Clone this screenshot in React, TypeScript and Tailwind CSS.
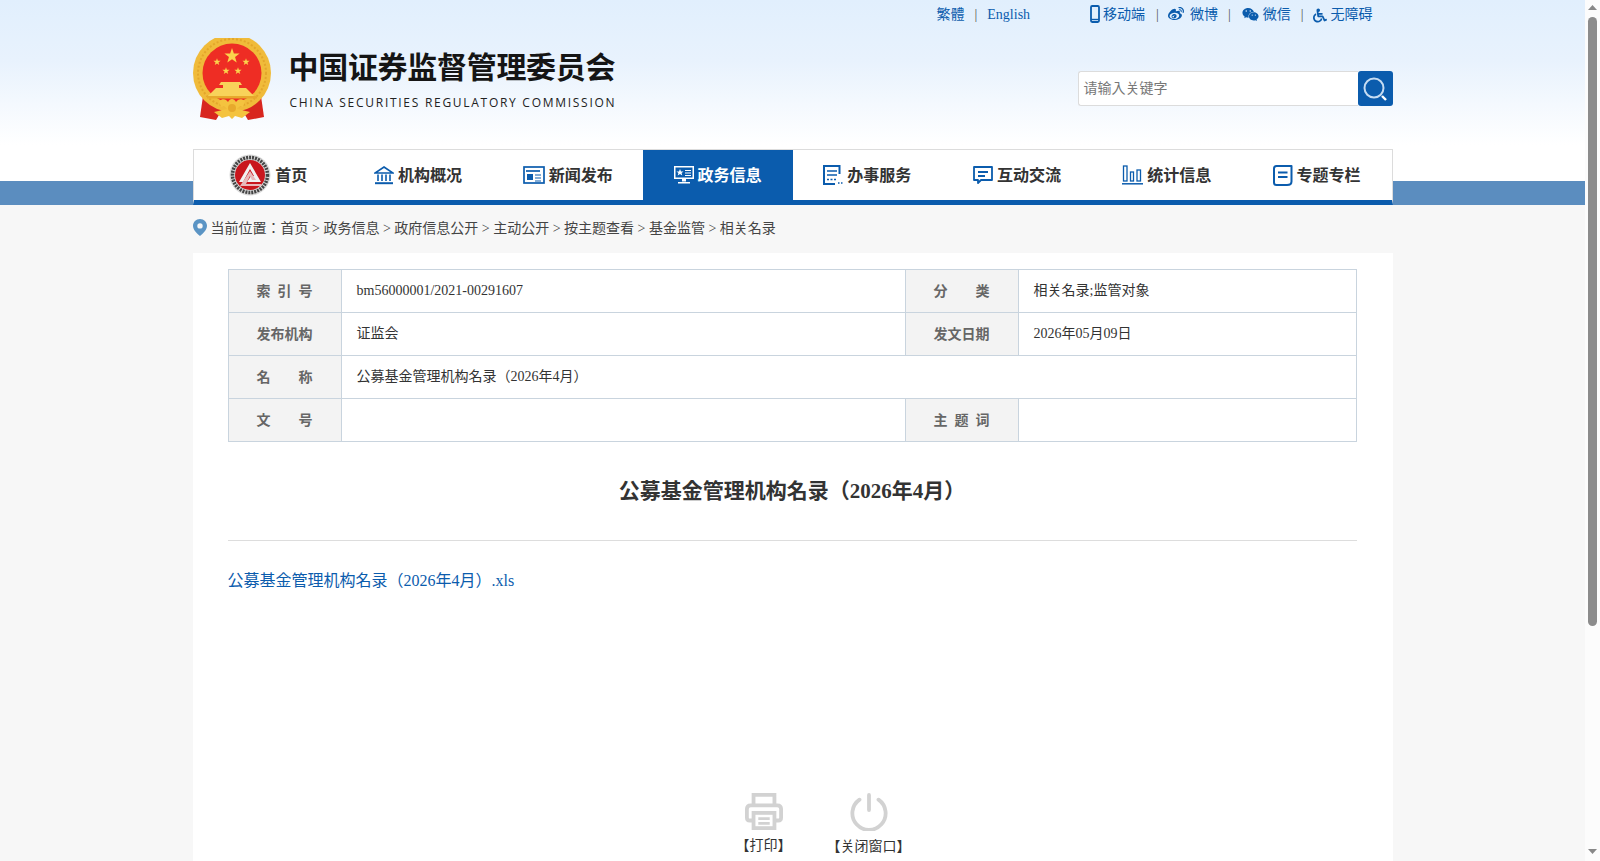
import { FaWeibo, FaWeixin, FaWheelchair } from "react-icons/fa";

const serif = "font-['Liberation_Serif','Noto_Sans_CJK_JP',serif]";

function Star({ x, y, r }: { x: number; y: number; r: number }) {
  const pts = [];
  for (let i = 0; i < 10; i++) {
    const a = -Math.PI / 2 + (i * Math.PI) / 5;
    const rr = i % 2 === 0 ? r : r * 0.4;
    pts.push(`${x + rr * Math.cos(a)},${y + rr * Math.sin(a)}`);
  }
  return <polygon points={pts.join(" ")} fill="#fbd34c" />;
}

// national emblem, simplified
function Emblem() {
  return (
    <svg className="ml-[-1px]" width="80" height="84" viewBox="0 0 80 84">
      <path d="M11 58 L8 79 L24 82 L30 72 L24 60Z" fill="#d8261f" />
      <path d="M69 58 L72 79 L56 82 L50 72 L56 60Z" fill="#d8261f" />
      <circle cx="40" cy="35" r="39" fill="#f0bb3a" />
      <circle cx="40" cy="35" r="34" fill="none" stroke="#e3a62b" strokeWidth="2" strokeDasharray="2 2" />
      <circle cx="40" cy="35" r="29.5" fill="#ee2d24" />
      <Star x={40} y={18} r={8} />
      <Star x={25} y={24} r={3.8} />
      <Star x={54} y={24} r={3.8} />
      <Star x={34} y={33} r={3.8} />
      <Star x={46} y={33} r={3.8} />
      <path d="M29 44 H48 L50 47 H47 V50 H54 L62 58 H16 L24 50 H31 V47 H27Z" fill="#f8d25a" />
      <rect x="15" y="58" width="50" height="2.5" fill="#e7a92c" />
      <path d="M27 63 C31 60 34 61 36 64 C38 60 42 60 44 64 C46 61 49 60 53 63 L51 69 C48 68 46 69 45 71 L58 74 L50 80 L43 78 L40 81 L37 78 L30 80 L22 74 L35 71 C34 69 32 68 29 69Z" fill="#f4c33f" />
      <circle cx="40" cy="70" r="4" fill="#e7a92c" />
    </svg>
  );
}

function HomeLogo() {
  return (
    <svg width="42" height="42" viewBox="0 0 42 42">
      <circle cx="21" cy="21" r="20.5" fill="#d9d9d9" />
      <circle cx="21" cy="21" r="17.5" fill="none" stroke="#444" strokeWidth="3.5" strokeDasharray="2 1" />
      <circle cx="21" cy="21" r="15" fill="#c9161d" />
      <path d="M21 9 L32 28 H18 L22 22 H25 L21 15 L14 28 H10Z" fill="#f1f1f1" />
      <path d="M21 17 L27 26 H23 L21 22 L17 30 H32 L33 32 H11Z" fill="#e8b9bb" />
    </svg>
  );
}

const blue = "#0b5cad";

function NavIcon({ name, active }: { name: string; active?: boolean }) {
  const c = active ? "#fff" : blue;
  if (name === "bank")
    return (
      <svg width="20" height="20" viewBox="0 0 20 20" fill="none" stroke={c} strokeWidth="1.6">
        <path d="M10 2 L19 8 H1Z" />
        <path d="M4 9.5V16M8 9.5V16M12 9.5V16M16 9.5V16" />
        <path d="M1 18.2H19" strokeWidth="2" />
      </svg>
    );
  if (name === "news")
    return (
      <svg width="22" height="18" viewBox="0 0 22 18" fill="none" stroke={c} strokeWidth="1.7">
        <rect x="1" y="1" width="20" height="16" />
        <path d="M3 5H17" />
        <rect x="4" y="8" width="6" height="6" fill={c} stroke="none" />
        <path d="M12 9H18M12 12H18M12 15H18" strokeWidth="1" />
      </svg>
    );
  if (name === "gov")
    return (
      <svg width="20" height="18" viewBox="0 0 20 18" fill={c}>
        <path fillRule="evenodd" d="M0 0H20V13H0ZM1.5 1.5V11.5H18.5V1.5Z" />
        <path d="M6 3 L7 5.5 H9.5 L7.6 7 L8.3 9.5 L6 8 L3.7 9.5 L4.4 7 L2.5 5.5 H5Z" />
        <path d="M11 4H17V5H11ZM11 6.5H17V7.5H11ZM11 9H17V10H11Z" />
        <path d="M8 13H12V15.5H8ZM4 16H16V17.5H4Z" />
      </svg>
    );
  if (name === "service")
    return (
      <svg width="20" height="20" viewBox="0 0 20 20" fill="none" stroke={c}>
        <path d="M16.5 9V1H1V19H12" strokeWidth="2" />
        <path d="M4 6H14M4 10H14" strokeWidth="1.5" />
        <path d="M4 14.5H13" strokeWidth="1.5" strokeDasharray="2 1.5" />
        <path d="M15 18H20" strokeWidth="1.6" strokeDasharray="1.5 1.5" />
      </svg>
    );
  if (name === "chat")
    return (
      <svg width="20" height="19" viewBox="0 0 20 19" fill="none" stroke={c} strokeWidth="1.8">
        <path d="M1 1H19V14H8L5 17V14H1Z" strokeLinejoin="round" />
        <path d="M5 6H15M5 10H12" />
      </svg>
    );
  if (name === "stats")
    return (
      <svg width="21" height="20" viewBox="0 0 21 20" fill="none" stroke={c} strokeWidth="1.3">
        <rect x="1.5" y="1" width="3.5" height="15" />
        <rect x="8.5" y="7" width="3" height="9" />
        <rect x="15" y="5" width="3.5" height="11" />
        <path d="M0 18.8H21" strokeWidth="1.5" />
      </svg>
    );
  return (
    <svg width="20" height="21" viewBox="0 0 20 21" fill="none" stroke={c} strokeWidth="2">
      <path d="M18.5 1H3.5Q1 1 1 3.5V17.5Q1 20 3.5 20H14Q18.5 20 18.5 16.5Z" strokeLinejoin="round" />
      <path d="M5 7.5H14.5M5 12H14.5" strokeWidth="2" />
    </svg>
  );
}

const navItems = [
  { label: "首页", icon: "home" },
  { label: "机构概况", icon: "bank" },
  { label: "新闻发布", icon: "news" },
  { label: "政务信息", icon: "gov", active: true },
  { label: "办事服务", icon: "service" },
  { label: "互动交流", icon: "chat" },
  { label: "统计信息", icon: "stats" },
  { label: "专题专栏", icon: "topic" },
];

const crumbs = ["首页", "政务信息", "政府信息公开", "主动公开", "按主题查看", "基金监管", "相关名录"];

function TopBar() {
  return (
    <div className={`h-[28px] flex items-center text-[14px] text-[#0b5cad] ${serif}`}>
      <span className="ml-[744px]">繁體</span>
      <span className="text-[#555] ml-[10px] mr-[10px]">|</span>
      <span>English</span>
      <span className="ml-[60px] flex items-center gap-[3px]">
        <svg width="10" height="18" viewBox="0 0 10 18" fill="none" stroke={blue} strokeWidth="1.8">
          <rect x="1" y="1" width="8" height="16" rx="1.2" />
          <path d="M1 14.5H9" strokeWidth="1.4" />
        </svg>
        移动端
      </span>
      <span className="text-[#555] ml-[11px] mr-[8px]">|</span>
      <span className="flex items-center gap-[5px]">
        <FaWeibo className="w-[18px] h-[16px]" />
        微博
      </span>
      <span className="text-[#555] ml-[10px] mr-[11px]">|</span>
      <span className="flex items-center gap-[4px]">
        <FaWeixin className="w-[17px] h-[15px]" />
        微信
      </span>
      <span className="text-[#555] ml-[10px] mr-[9px]">|</span>
      <span className="flex items-center gap-[4px]">
        <FaWheelchair className="w-[14px] h-[17px] mt-[3px]" />
        无障碍
      </span>
    </div>
  );
}

function Header() {
  return (
    <div className="bg-[linear-gradient(to_bottom,#e1effd_0,#e8f2fd_60px,#ffffff_145px,#ffffff_181px,#5b8dbf_181px,#5b8dbf_205px)] h-[205px]">
      <div className="w-[1200px] mx-auto">
        <TopBar />
        <div className="flex items-start h-[121px]">
          <div className="mt-[10px] flex items-start">
            <Emblem />
            <div className="ml-[17px] mt-[7px]">
              <div className="font-['Noto_Sans_CJK_SC',sans-serif] font-bold text-[30px] leading-[40px] text-[#151515] tracking-[-0.3px] whitespace-nowrap">
                中国证券监督管理委员会
              </div>
              <div className="font-['Open_Sans',sans-serif] text-[12px] leading-[16px] mt-[10px] ml-[1px] text-[#222] tracking-[1.72px] whitespace-nowrap">
                CHINA SECURITIES REGULATORY COMMISSION
              </div>
            </div>
          </div>
          <div className="ml-auto mt-[43px] flex w-[315px] h-[35px]">
            <div className={`flex-1 bg-white border border-[#dcdcdc] border-r-0 rounded-l-[3px] text-[14px] text-[#777] pl-[5px] leading-[33px] ${serif}`}>
              请输入关键字
            </div>
            <div className="w-[35px] bg-[#0b5cad] rounded-[3px] flex items-center justify-center">
              <svg width="26" height="26" viewBox="0 0 26 26" fill="none" stroke="#c6dcf2" strokeWidth="2">
                <circle cx="12" cy="12" r="9.5" />
                <path d="M20 20L24 24" stroke="#fff" strokeWidth="2.4" />
              </svg>
            </div>
          </div>
        </div>
        <div className="h-[56px] bg-white border-t border-x border-[#dcdcdc] border-b-[5px] border-b-[#0b5cad] flex">
          {navItems.map((item) => (
            <div
              key={item.label}
              className={`w-[150px] flex items-center justify-center gap-[4px] font-['Noto_Sans_CJK_JP',sans-serif] font-bold text-[16px] ${
                item.active ? "bg-[#0b5cad] text-white" : "text-[#333]"
              }`}
            >
              {item.icon === "home" ? <HomeLogo /> : <NavIcon name={item.icon} active={item.active} />}
              <span className="mb-[2px]">{item.label}</span>
            </div>
          ))}
        </div>
      </div>
    </div>
  );
}

const th = "w-[113px] bg-[#f3f3f3] border border-[#c9d4de] text-center font-bold text-[#666] p-0";
const td = "border border-[#c9d4de] pl-[15px] pb-[1px] text-[#333] p-0";

function InfoTable() {
  return (
    <table className={`w-[1129px] table-fixed border-collapse text-[14px] ${serif}`}>
      <colgroup>
        <col className="w-[113px]" />
        <col className="w-[564px]" />
        <col className="w-[113px]" />
        <col />
      </colgroup>
      <tbody>
        <tr className="h-[43px]">
          <td className={th}>索&ensp;引&ensp;号</td>
          <td className={td}>bm56000001/2021-00291607</td>
          <td className={th}>分&emsp;&emsp;类</td>
          <td className={td}>相关名录;监管对象</td>
        </tr>
        <tr className="h-[43px]">
          <td className={th}>发布机构</td>
          <td className={td}>证监会</td>
          <td className={th}>发文日期</td>
          <td className={td}>2026年05月09日</td>
        </tr>
        <tr className="h-[43px]">
          <td className={th}>名&emsp;&emsp;称</td>
          <td className={td} colSpan={3}>公募基金管理机构名录（2026年4月）</td>
        </tr>
        <tr className="h-[43px]">
          <td className={th}>文&emsp;&emsp;号</td>
          <td className={td}></td>
          <td className={th}>主&ensp;题&ensp;词</td>
          <td className={td}></td>
        </tr>
      </tbody>
    </table>
  );
}

function Scrollbar() {
  return (
    <div className="w-[15px] shrink-0 bg-[#fcfcfc] flex flex-col items-center">
      <svg className="mt-[5px]" width="9" height="5" viewBox="0 0 9 5"><path d="M4.5 0L9 5H0Z" fill="#888" /></svg>
      <div className="w-[9px] h-[609px] mt-[7px] bg-[#8c8c8c] rounded-[5px]" />
      <svg className="mt-auto mb-[7px]" width="9" height="5" viewBox="0 0 9 5"><path d="M0 0H9L4.5 5Z" fill="#888" /></svg>
    </div>
  );
}

export default function App() {
  return (
    <div className={`flex h-[861px] overflow-hidden bg-[#f7f7f7] ${serif}`}>
      <div className="flex-1 min-w-0 overflow-hidden">
        <Header />
        <div className="w-[1200px] mx-auto">
          <div className="h-[48px] flex items-center text-[14px] text-[#444]">
            <svg className="mb-[3px] mr-[4px]" width="14" height="17" viewBox="0 0 14 17">
              <path fillRule="evenodd" d="M7 0C3 0 0 3 0 6.8C0 11 4 14.5 7 17C10 14.5 14 11 14 6.8C14 3 11 0 7 0ZM7 4.2A2.7 2.7 0 1 1 7 9.6A2.7 2.7 0 1 1 7 4.2Z" fill="#5b94c4" />
            </svg>
            <span className="whitespace-pre mb-[2px]">
              当前位置：{crumbs.join(" > ")}
            </span>
          </div>
          <div className="bg-white px-[35px] pt-[16px] h-[700px]">
            <InfoTable />
            <h1 className="mt-[32px] h-[34px] leading-[34px] text-center text-[21px] font-bold text-[#333] w-[1129px]">
              公募基金管理机构名录（2026年4月）
            </h1>
            <div className="mt-[32px] border-t border-[#dddddd] w-[1129px]" />
            <a className="block mt-[30px] text-[16px] leading-[20px] text-[#0b5cad]">
              公募基金管理机构名录（2026年4月）.xls
            </a>
            <div className="mt-[201px] pl-[52px] flex justify-center text-[14px] text-[#333]">
              <div className="flex flex-col items-center w-[90px]">
                <svg width="38" height="38" viewBox="0 0 40 40" fill="none" stroke="#d2d2d2" strokeWidth="4">
                  <path d="M9 14V3H31V14" />
                  <path d="M9 30H5Q2 30 2 27V18Q2 14 6 14H34Q38 14 38 18V27Q38 30 35 30H31" />
                  <rect x="9" y="22" width="22" height="16" />
                  <path d="M14 28H26M14 33H26" strokeWidth="3" />
                </svg>
                <span className="mt-[5px]">【打印】</span>
              </div>
              <div className="flex flex-col items-center w-[100px] ml-[10px]">
                <svg className="mt-[1px]" width="38" height="38" viewBox="0 0 40 40" fill="none" stroke="#d2d2d2" strokeWidth="4" strokeLinecap="round">
                  <path d="M10 7A17.5 17.5 0 1 0 30 7" />
                  <path d="M20 2V18" />
                </svg>
                <span className="mt-[5px]">【关闭窗口】</span>
              </div>
            </div>
          </div>
        </div>
      </div>
      <Scrollbar />
    </div>
  );
}
